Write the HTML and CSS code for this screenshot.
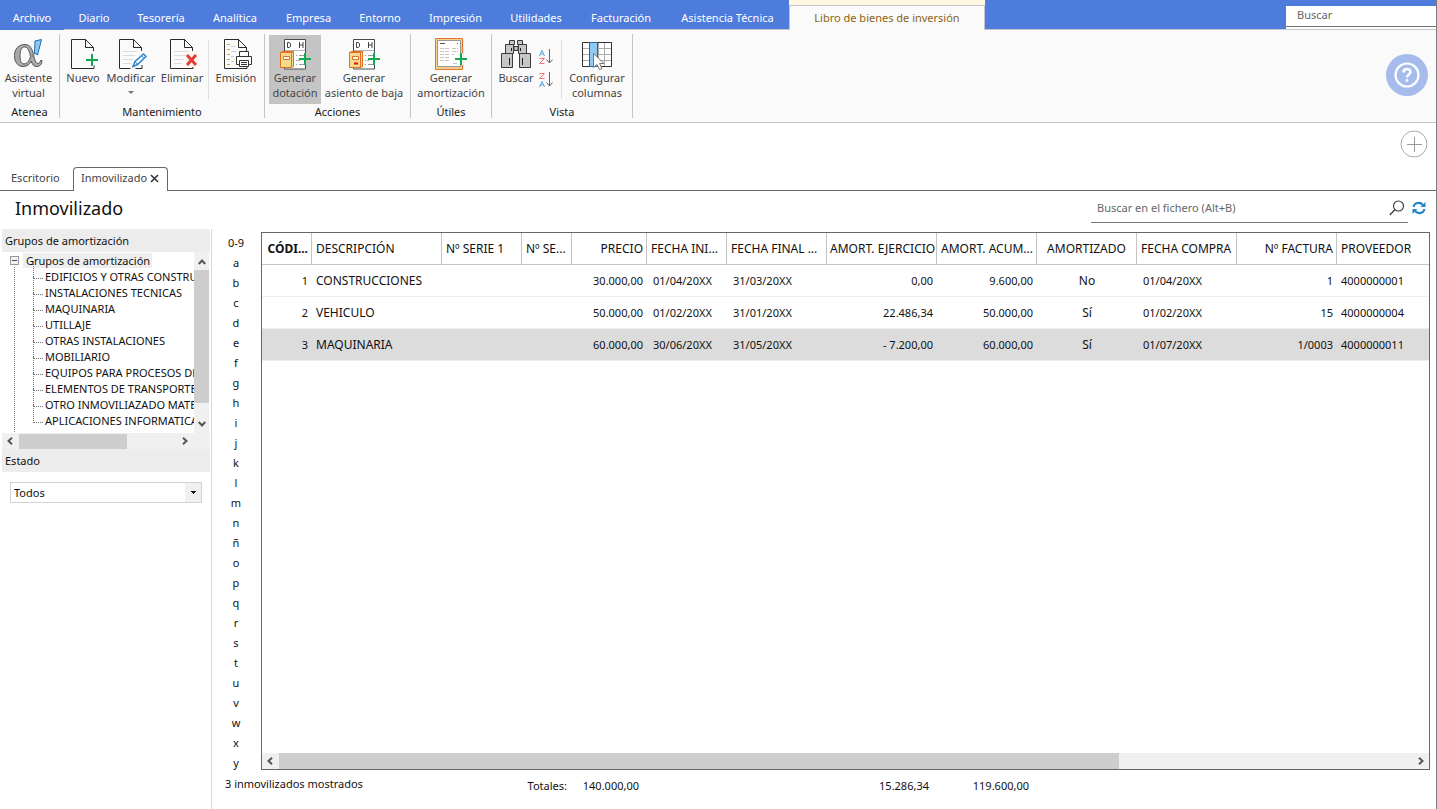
FILE: index.html
```
<!DOCTYPE html>
<html lang="es">
<head>
<meta charset="utf-8">
<title>Libro de bienes de inversión</title>
<link rel="stylesheet" href="styles.css">
</head>
<body>
<svg class="defs" aria-hidden="true">
  <symbol id="page" viewBox="0 0 32 32"><path d="M19 1.500H4.500v29H27V27M18.500 1.500L26.500 9.500V13M18.500 1.500v8h8" fill="none" stroke="#2b2b2b"/></symbol>
  <symbol id="lines" viewBox="0 0 32 32"><path d="M8 13.500h14M8 17.500h12M8 21.500h10M8 25.500h8" stroke="#dcdcdc"/></symbol>
  <symbol id="plus" viewBox="0 0 12 12"><path d="M6 0v12M0 6h12" stroke="#12a84f" stroke-width="2"/></symbol>
  <symbol id="ledger" viewBox="0 0 32 32">
    <path d="M6 2h20v29H6z" fill="#fff"/>
    <path d="M5.500 14V1.500h21V16M5.500 29v2h21V26" fill="none" stroke="#4a4a4a"/>
    <path d="M8.500 4.500v5h1.500l1.500-1v-3l-1.500-1zM20.500 4v6M24 4v6M20.500 7h3.500" fill="none" stroke="#444"/>
    <path d="M6 12.500h20" stroke="#b5b5b5"/>
    <path d="M17 17.500h1M20 17.500h5M17 22.500h1M19 22.500h2M17 26.500h1M20 26.500h5" stroke="#9a9a9a"/>
    <path d="M1.500 14.500l2-1h11v15l-2 1h-11z" fill="#f6d98c" stroke="#e2701f"/>
    <path d="M1.500 14.500h11v15M12.500 14.500l2-1" fill="none" stroke="#e2701f"/>
    <path d="M4.500 18.500h6v3h-6z" fill="#fff" stroke="#e2701f"/>
  </symbol>
  <symbol id="down" viewBox="0 0 9 16"><path d="M4.500 0v14M1.500 10.500l3 3.500 3-3.500" fill="none" stroke="#666"/></symbol>
  <symbol id="a" viewBox="0 0 6 6"><path d="M.5 6L3 .5 5.500 6M1.500 4h3" fill="none" stroke="#55a5dc"/></symbol>
  <symbol id="z" viewBox="0 0 6 6"><path d="M.5.500h5L.5 5.500h5" fill="none" stroke="#ef7676"/></symbol>
  <symbol id="chev" viewBox="0 0 8 8"><path d="M6 .8L2.500 4 6 7.200" fill="none" stroke="#555" stroke-width="2"/></symbol>
</svg>
<div class="app">
<header>
  <div class="menubar">
    <nav class="menu">
      <a class="first" href="#">Archivo</a><a href="#">Diario</a><a href="#">Tesorería</a><a href="#">Analítica</a><a href="#">Empresa</a><a href="#">Entorno</a><a href="#">Impresión</a><a href="#">Utilidades</a><a href="#">Facturación</a><a href="#">Asistencia Técnica</a><a class="current" href="#"><span>Libro de bienes de inversión</span></a>
    </nav>
    <div class="finder"><input type="text" placeholder="Buscar" aria-label="Buscar"></div>
  </div>
  <div class="ribbon">
    <section class="group atenea">
      <div class="tools">
        <button><svg viewBox="0 0 32 32"><path d="M12 6.500c5 0 7 4 8.500 10 1.300 6 2.500 9 4.500 9 1.500 0 2-1.300 2.500-3h1.500c-.3 4-2 6-5.300 6-3 0-4.500-2-5.500-5.500C16.500 26.500 14 28.500 10 28.500 5 28.500 1.500 24.500 1.500 17.500S6 6.500 12 6.500zM11.500 9C8.500 9 7 12.500 7 17.500s1.200 8.500 4 8.500c3.200 0 5.300-3.500 6.500-7.500C16.500 13 15 9 11.500 9z" fill="#a9a9a9" stroke="#555" fill-rule="evenodd"/><path d="M19 19c2-3 3.500-6 4.500-9" fill="none" stroke="#888" stroke-width="2"/><path d="M22 3l6.500-1.500-4 15.500-3-2z" fill="#8fc7ee" stroke="#1870b8"/></svg><span>Asistente<br>virtual</span></button>
      </div><h2>Atenea</h2>
    </section>
    <section class="group mant">
      <div class="tools">
        <button class="w46"><svg viewBox="0 0 32 32"><use href="#page"/><path d="M24.500 16v12M18.500 22h12" stroke="#fafafa" stroke-width="5"/><use href="#plus" x="19" y="16" width="12" height="12"/></svg><span>Nuevo</span></button>
        <button class="w50"><svg viewBox="0 0 32 32"><use href="#page"/><use href="#lines"/><path d="M18 29.500l2-5 9-8.500 2.500 2.500-9 8.500z" fill="#fafafa" stroke="#fafafa" stroke-width="4"/><path d="M18 28.500l2-5 8.500-7.500 2.500 2.500-8.500 8z" fill="#fff" stroke="#2a86cf" stroke-width="1.500"/><path d="M20 23.500l2.500 3M27 18l2 2.500" stroke="#2a86cf"/></svg><span>Modificar</span><i class="caret"></i></button>
        <button class="w52"><svg viewBox="0 0 32 32"><use href="#page"/><use href="#lines"/><path d="M25.500 15v14" stroke="#fafafa" stroke-width="7"/><path d="M21 17l9 10M30 17l-9 10" stroke="#e93c36" stroke-width="3"/></svg><span>Eliminar</span></button>
        <i class="rule"></i>
        <button class="w54"><svg viewBox="0 0 32 32"><use href="#page"/><path d="M7 6.500h3M7 11.500h3M7 16.500h3M7 21.500h3M7 26.500h3" stroke="#ee9420"/><path d="M11 8.500h4M11 13.500h5M11 18.500h3M11 23.500h3" stroke="#ccc"/><path d="M19.500 18v-4.500h9V18M19.500 26.500h-3v-8h15v8h-3M19.500 22.500h9v6h-9zM21 24.500h6M21 26.500h6" fill="#fff" stroke="#333"/></svg><span>Emisión</span></button>
      </div><h2>Mantenimiento</h2>
    </section>
    <section class="group acciones">
      <div class="tools">
        <button class="w52 pressed"><svg viewBox="0 0 32 32"><use href="#ledger"/><use href="#plus" x="20" y="15" width="12" height="12"/></svg><span>Generar<br>dotación</span></button>
        <button class="w86"><svg viewBox="0 0 32 32"><use href="#ledger"/><path d="M6 25.500h4" stroke="#dc1010" stroke-width="2"/><use href="#plus" x="20" y="15" width="12" height="12"/></svg><span>Generar<br>asiento de baja</span></button>
      </div><h2>Acciones</h2>
    </section>
    <section class="group utiles">
      <div class="tools">
        <button class="w80"><svg viewBox="0 0 32 32"><path d="M2 2h25v28H2z" fill="#fff" stroke="#f6cf8d" stroke-width="3"/><path d="M.5.500h27v31H.5z" fill="none" stroke="#df782e"/><path d="M2.500 2.500h23v26h-23z" fill="#fff" stroke="#999"/><path d="M5 5.500h5M22 5.500h1" stroke="#555"/><path d="M5 10.500h10M17 10.500h6M5 13.500h10M17 13.500h6M5 16.500h10M17 16.500h2M5 19.500h10M5 22.500h10M18 25.500h5" stroke="#c4c4c4" stroke-dasharray="4 1"/><path d="M26 15v12" stroke="#fafafa" stroke-width="4"/><use href="#plus" x="20" y="15" width="12" height="12"/></svg><span>Generar<br>amortización</span></button>
      </div><h2>Útiles</h2>
    </section>
    <section class="group vista">
      <div class="tools">
        <button class="w44"><svg viewBox="0 0 32 32"><path d="M9.500 2.500h5v4h-5zM17.500 2.500h5v4h-5zM14 8.500h4v4h-4zM5.500 6.500h8v9h-8zM18.500 6.500h8v9h-8zM1.500 15.500h11v14h-11zM19.500 15.500h11v14h-11z" fill="#c6c6c6" stroke="#3c3c3c"/><path d="M11.500 10v3M20.500 10v3M9.500 20v7M22.500 20v7" stroke="#222"/></svg><span>Buscar</span></button>
        <div class="sorts">
          <button aria-label="Orden ascendente"><svg viewBox="0 0 16 16"><use href="#a" x="1" y="1" width="6" height="6"/><use href="#z" x="1" y="9" width="6" height="6"/><use href="#down" x="7" y="0" width="9" height="16"/></svg></button>
          <button aria-label="Orden descendente"><svg viewBox="0 0 16 16"><use href="#z" x="1" y="1" width="6" height="6"/><use href="#a" x="1" y="9" width="6" height="6"/><use href="#down" x="7" y="0" width="9" height="16"/></svg></button>
        </div>
        <i class="rule"></i>
        <button class="w70"><svg viewBox="0 0 32 32"><path d="M1.500 4.500h29v24h-29z" fill="#fff"/><path d="M2 10.500h28M2 16.500h28M2 22.500h28M17.500 5v23M23.500 5v23" stroke="#aaa"/><path d="M1.500 4.500h29v24h-29z" fill="none" stroke="#333"/><path d="M8.500 4.500h8v24h-8z" fill="#8fc8f1" stroke="#1769aa"/><path d="M12.500 15.500v14l3.500-3 2.500 5 2.500-1-2.500-5h4.500z" fill="#fff" stroke="#777"/></svg><span>Configurar<br>columnas</span></button>
      </div><h2>Vista</h2>
    </section>
    <button class="help" aria-label="Ayuda"><svg viewBox="0 0 42 42"><circle cx="21" cy="21" r="21" fill="#a4bbec"/><circle cx="21" cy="21" r="11.500" fill="none" stroke="#fff" stroke-width="2.200"/><path d="M17.500 18.500c0-5 7-4.500 7-.5 0 2.500-3.500 2.500-3.500 5.500" fill="none" stroke="#fff" stroke-width="2.500"/><circle cx="21" cy="26.500" r="1.400" fill="#fff"/></svg></button>
  </div>
</header>
<div class="addrow"><button aria-label="Añadir"><svg viewBox="0 0 28 28"><circle cx="14" cy="14" r="13" fill="none" stroke="#aaa"/><path d="M14.500 7v15M7 14.500h15" stroke="#999"/></svg></button></div>
<nav class="tabs"><a href="#">Escritorio</a><a class="open" href="#">Inmovilizado <svg viewBox="0 0 9 9"><path d="M1 1l7 7M8 1L1 8" stroke="#333" stroke-width="1.600"/></svg></a></nav>
<div class="titlebar">
  <h1>Inmovilizado</h1>
  <div class="filesearch"><input type="text" placeholder="Buscar en el fichero (Alt+B)" aria-label="Buscar en el fichero"><button aria-label="Buscar en el fichero"><svg viewBox="0 0 16 16"><circle cx="9.500" cy="6" r="5" fill="none" stroke="#333" stroke-width="1.100"/><path d="M6 9.500L.8 15" stroke="#333" stroke-width="1.200"/></svg></button></div>
  <button aria-label="Actualizar"><svg viewBox="0 0 14 14"><path d="M1.500 6C2.500 1.500 8 .5 11 4M12.500 8C11.500 12.500 6 13.500 3 10" fill="none" stroke="#1f86c8" stroke-width="2"/><path d="M13.500 1v5H8.500zM.5 13V8h5z" fill="#1f86c8"/></svg></button>
</div>
<main>
  <aside>
    <h3>Grupos de amortización</h3>
    <div class="treebox">
      <div class="tree">
        <div class="root"><button class="minus" aria-label="Contraer"></button><span>Grupos de amortización</span></div>
        <ul>
          <li>EDIFICIOS Y OTRAS CONSTRUCCIONES</li><li>INSTALACIONES TECNICAS</li><li>MAQUINARIA</li><li>UTILLAJE</li><li>OTRAS INSTALACIONES</li><li>MOBILIARIO</li><li>EQUIPOS PARA PROCESOS DE INFORMACION</li><li>ELEMENTOS DE TRANSPORTE</li><li>OTRO INMOVILIAZADO MATERIAL</li><li>APLICACIONES INFORMATICAS</li>
        </ul>
      </div>
      <div class="vbar"><svg class="up" viewBox="0 0 8 8"><use href="#chev"/></svg><i></i><svg class="dn" viewBox="0 0 8 8"><use href="#chev"/></svg></div>
    </div>
    <div class="hbar"><svg viewBox="0 0 8 8"><use href="#chev"/></svg><i></i><svg class="rt" viewBox="0 0 8 8"><use href="#chev"/></svg></div>
    <h3><label for="estado">Estado</label></h3>
    <select id="estado"><option>Todos</option></select>
  </aside>
  <nav class="letters"><a href="#">0-9</a><a href="#">a</a><a href="#">b</a><a href="#">c</a><a href="#">d</a><a href="#">e</a><a href="#">f</a><a href="#">g</a><a href="#">h</a><a href="#">i</a><a href="#">j</a><a href="#">k</a><a href="#">l</a><a href="#">m</a><a href="#">n</a><a href="#">ñ</a><a href="#">o</a><a href="#">p</a><a href="#">q</a><a href="#">r</a><a href="#">s</a><a href="#">t</a><a href="#">u</a><a href="#">v</a><a href="#">w</a><a href="#">x</a><a href="#">y</a></nav>
  <div class="grid">
    <table>
      <colgroup><col class="c50"><col class="c130"><col class="c80"><col class="c50"><col class="c75"><col class="c80"><col class="c100"><col class="c110"><col class="c100"><col class="c100"><col class="c100"><col class="c100"><col></colgroup>
      <thead><tr><th class="r b">CÓDI...</th><th>DESCRIPCIÓN</th><th>Nº SERIE 1</th><th>Nº SE...</th><th class="r">PRECIO</th><th>FECHA INI...</th><th>FECHA FINAL ...</th><th class="r">AMORT. EJERCICIO</th><th class="r">AMORT. ACUM...</th><th class="c">AMORTIZADO</th><th>FECHA COMPRA</th><th class="r">Nº FACTURA</th><th>PROVEEDOR</th></tr></thead>
      <tbody>
        <tr><td class="r">1</td><td class="name">CONSTRUCCIONES</td><td></td><td></td><td class="r">30.000,00</td><td class="d">01/04/20XX</td><td class="d">31/03/20XX</td><td class="r">0,00</td><td class="r">9.600,00</td><td class="c">No</td><td class="d">01/04/20XX</td><td class="r">1</td><td>4000000001</td></tr>
        <tr><td class="r">2</td><td class="name">VEHICULO</td><td></td><td></td><td class="r">50.000,00</td><td class="d">01/02/20XX</td><td class="d">31/01/20XX</td><td class="r">22.486,34</td><td class="r">50.000,00</td><td class="c">Sí</td><td class="d">01/02/20XX</td><td class="r">15</td><td>4000000004</td></tr>
        <tr class="sel"><td class="r">3</td><td class="name">MAQUINARIA</td><td></td><td></td><td class="r">60.000,00</td><td class="d">30/06/20XX</td><td class="d">31/05/20XX</td><td class="r">- 7.200,00</td><td class="r">60.000,00</td><td class="c">Sí</td><td class="d">01/07/20XX</td><td class="r">1/0003</td><td>4000000011</td></tr>
      </tbody>
    </table>
    <div class="hbar"><svg viewBox="0 0 8 8"><use href="#chev"/></svg><i></i><svg class="rt" viewBox="0 0 8 8"><use href="#chev"/></svg></div>
  </div>
  <footer><span class="count">3 inmovilizados mostrados</span><span>Totales:</span><span>140.000,00</span><span>15.286,34</span><span>119.600,00</span></footer>
</main>
</div>
</body>
</html>
```
FILE: styles.css
```
* { box-sizing: border-box; }
body { margin: 0; font: 11px/15px "Noto Sans", "Open Sans", sans-serif; color: #111; background: #fff; }
.defs { position: absolute; width: 0; height: 0; }
.app { display: flex; flex-direction: column; min-height: 100vh; border-right: 1px solid #7c7c7c; }
a { color: inherit; text-decoration: none; }
h1, h2, h3 { margin: 0; font-weight: 400; }
button { display: block; margin: 0; padding: 0; border: 0; background: none; font: inherit; color: inherit; }
svg { display: block; }
input { border: 0; outline: 0; background: none; font: inherit; padding: 0; min-width: 0; }
input::placeholder { color: #666; opacity: 1; }

.menubar { display: flex; justify-content: space-between; height: 30px; background: #4e7cdc; border-bottom: 1px solid #c3c6cf; }
.menu { display: grid; grid-template-columns: 64px 60px 74px 74px 73px 70px 81px 80px 90px 123px 196px; color: #fff; text-align: center; line-height: 36px; }
.menu a { height: 29px; white-space: nowrap; }
.menu .first { height: 30px; background: #4e7cdc; }
.menu .current { height: 30px; padding-top: 5px; background: #fff8e2; color: #8a6414; line-height: 24px; }
.current span { display: block; height: 25px; border: 1px solid #c3c6cf; border-bottom: 0; background: #fafafa; }
.finder { width: 150px; height: 23px; margin-top: 6px; background: #fff; }
.finder input { width: 100%; height: 21px; padding: 0 11px 3px; border-bottom: 1px solid #777; }

.ribbon { display: flex; height: 93px; background: #fafafa; border-bottom: 1px solid #c3c3c3; color: #444; }
.group { display: flex; flex-direction: column; margin: 4px 0; border-right: 1px solid #c4c4c4; }
.group h2 { font-size: 11px; line-height: 12px; text-align: center; color: #222; }
.tools { display: flex; height: 74px; padding-top: 1px; }
.tools > button { display: flex; flex-direction: column; align-items: center; justify-content: flex-start; height: 69px; padding-top: 3px; white-space: nowrap; }
.tools > button > svg { flex: none; width: 32px; height: 32px; }
.tools .pressed { background: #c4c4c4; }
.atenea { width: 60px; }
.atenea button { width: 57px; }
.mant { width: 205px; }
.acciones { width: 146px; }
.acciones .tools { padding-left: 4px; }
.utiles { width: 81px; }
.vista { width: 141px; }
.vista .tools { padding-left: 2px; }
.w44 { width: 44px; }
.w46 { width: 46px; }
.w50 { width: 50px; }
.w52 { width: 52px; }
.w54 { width: 54px; }
.w70 { width: 70px; }
.w80 { width: 80px; }
.w86 { width: 86px; }
.rule { width: 1px; height: 59px; margin-top: 5px; background: #ddd; }
.caret { width: 0; margin-top: 6px; border: 3px solid transparent; border-top-color: #777; border-bottom: 0; }
.sorts { width: 23px; padding-top: 14px; }
.sorts button { display: flex; align-items: flex-start; height: 23px; }
.sorts svg { width: 16px; height: 16px; }
.help { width: 42px; margin: 24px 8px 0 auto; align-self: flex-start; }
.help svg { width: 42px; height: 42px; }

.addrow { display: flex; justify-content: flex-end; align-items: flex-start; height: 44px; padding: 7px 8px 0 0; }
.addrow svg { width: 28px; height: 28px; }
.tabs { display: flex; height: 24px; border-bottom: 1px solid #666; color: #444; line-height: 22px; }
.tabs a { width: 73px; padding-left: 11px; }
.tabs .open { display: flex; align-items: center; gap: 3px; width: 95px; height: 24px; padding: 0 0 3px 7px; border: 1px solid #666; border-bottom: 0; border-radius: 4px 4px 0 0; background: #fff; }
.open svg { width: 9px; height: 9px; }
.titlebar { display: flex; height: 38px; padding: 0 10px 4px 15px; align-items: center; gap: 4px; }
.titlebar h1 { flex: 1; font-size: 18px; line-height: 34px; }
.titlebar svg { width: 14px; height: 14px; }
.filesearch { display: flex; width: 317px; height: 30px; align-items: center; padding: 0 3px 0 6px; border-bottom: 1px solid #777; }
.filesearch input { flex: 1; }
.filesearch svg { width: 16px; height: 16px; }

main { flex: 1; display: grid; grid-template-columns: 212px 48px 1fr; grid-template-rows: 541px 1fr; }
aside { grid-row: 1 / 3; padding: 0 1px 0 2px; border-right: 1px solid #d8d8d8; }
h3 { height: 23px; padding-left: 3px; background: #ececec; font-size: 11px; line-height: 23px; }
.treebox { display: flex; height: 181px; }
.tree { position: relative; flex: 1; overflow: hidden; margin-bottom: 1px; white-space: nowrap; }
.root { display: flex; align-items: center; height: 17px; padding: 0 0 1px 8px; }
.root span { margin-left: 4px; padding: 0 2px 0 3px; background: #eee; }
.minus { width: 9px; height: 9px; border: 1px solid #999; background: linear-gradient(#356, #356) center / 5px 1px no-repeat #f4f4f4; }
.tree::before { content: ""; position: absolute; left: 12px; top: 15px; bottom: 0; border-left: 1px dotted #777; }
.tree ul { list-style: none; margin: 0 0 0 31px; padding: 0; }
.tree li { position: relative; height: 16px; padding-left: 12px; line-height: 16px; }
.tree li::before { content: ""; position: absolute; left: 0; top: -8px; width: 9px; height: 17px; border: dotted #777; border-width: 0 0 1px 1px; }
.vbar { display: flex; flex-direction: column; align-items: center; width: 15px; margin-right: 1px; background: #f0f0f0; }
.vbar i { width: 15px; height: 133px; background: #cdcdcd; }
.vbar svg, .hbar svg { width: 8px; height: 8px; flex: none; }
.vbar .up { transform: rotate(90deg); margin: 6px 0 4px; }
.vbar .dn { transform: rotate(-90deg); margin: auto 0 5px; }
.hbar { display: flex; align-items: center; height: 16px; background: #f0f0f0; padding: 0 4px; }
.hbar i { width: 108px; height: 15px; margin: 0 0 0 5px; background: #cdcdcd; }
.hbar .rt { transform: rotate(180deg); margin-left: auto; }
aside .hbar { padding-right: 21px; }
select { display: block; width: 192px; height: 21px; margin: 10px 0 0 8px; padding: 0 3px; border: 1px solid #d2d2d2; border-radius: 0; appearance: none; font: inherit; color: #111; background: linear-gradient(#111, #111) 180px 8px / 5px 1px no-repeat, linear-gradient(#111, #111) 181px 9px / 3px 1px no-repeat, linear-gradient(#111, #111) 182px 10px / 1px 1px no-repeat, linear-gradient(90deg, #fff 174px, #f0f0f0 0); }
.letters { padding-top: 4px; text-align: center; }
.letters a { display: block; line-height: 20px; }
.grid { display: flex; flex-direction: column; margin: 3px 6px 0 1px; border: 1px solid #666; overflow: hidden; }
table { width: 100%; table-layout: fixed; border-collapse: separate; border-spacing: 0; }
.c50 { width: 50px; } .c75 { width: 75px; } .c80 { width: 80px; } .c100 { width: 100px; } .c110 { width: 110px; } .c130 { width: 130px; }
th, td { height: 32px; padding: 0 4px; text-align: left; font-size: 12px; font-weight: 400; white-space: nowrap; }
th { border-right: 1px solid #c4c4c4; border-bottom: 1px solid #c4c4c4; }
th:last-child { border-right: 0; }
td { border-bottom: 1px solid #eee; font-size: 11px; }
th.r { padding: 0 3px; }
.r { text-align: right; }
.c { text-align: center; }
th.b { font-weight: 700; }
td.name, td.c { font-size: 12px; }
td.d { padding-left: 6px; }
.sel td { background: #dcdcdc; }
.grid .hbar { margin-top: auto; }
.grid .hbar i { width: 840px; height: 16px; }
footer { grid-column: 2 / 4; display: grid; grid-template-columns: 284px 58px 72px 290px 100px; padding: 6px 0 10px 13px; }
footer span { text-align: right; padding-top: 2px; }
footer .count { text-align: left; padding-top: 0; }
```
